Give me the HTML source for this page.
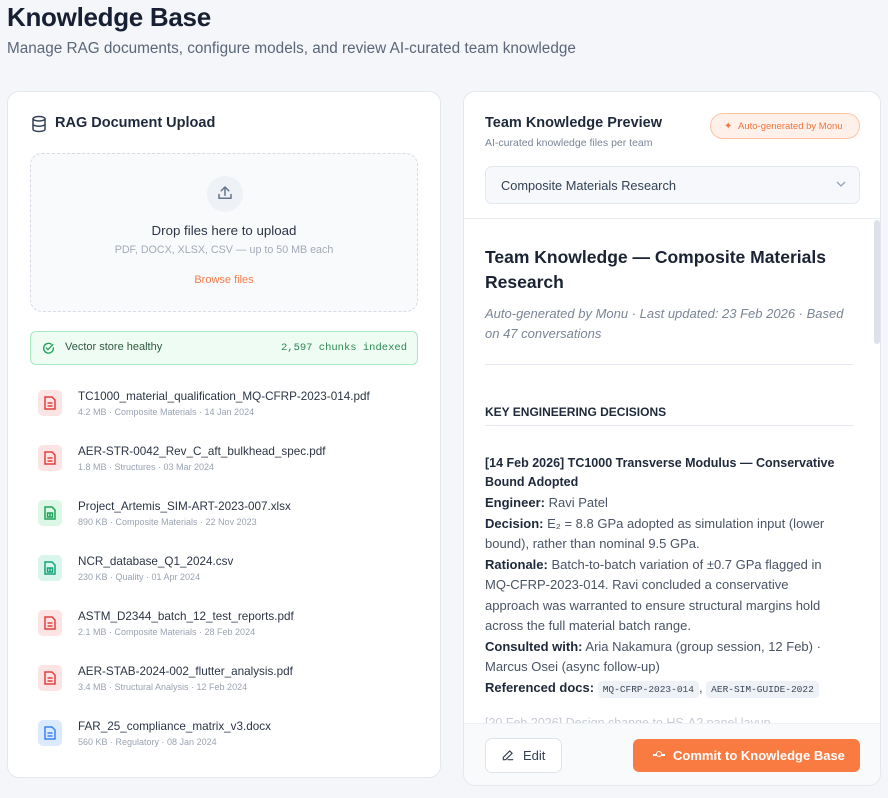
<!DOCTYPE html>
<html><head><meta charset="utf-8"><style>
*{box-sizing:border-box;margin:0;padding:0}
body{width:888px;height:798px;overflow:hidden;background:#f4f6f9;font-family:"Liberation Sans",sans-serif;color:#1e293b;position:relative}
.abs{position:absolute}
h1{position:absolute;left:7px;top:2px;font-size:26px;font-weight:700;color:#172033;letter-spacing:-0.3px}
.sub{left:7px;top:40px;font-size:15.3px;color:#5b6678}
.card{position:absolute;background:#fff;border:1px solid #e3e8ef;border-radius:12px;overflow:hidden}
.drop{left:22px;top:61px;width:388px;height:159px;border:1px dashed #d6dce5;border-radius:12px;background:#f9fafc}
.vs{left:22px;top:239px;width:388px;height:34px;border:1px solid #a9e8c0;border-radius:6px;background:#effcf3}
.file{position:absolute;left:30px}
.fi{position:absolute;left:0;top:0;width:24px;height:26px;border-radius:5px}
.fi svg{position:absolute;left:6px;top:6px}
.fn{position:absolute;left:40px;top:0px;font-size:11.7px;color:#2c3546;white-space:nowrap}
.fm{position:absolute;left:40px;top:17px;font-size:9px;color:#9aa3b2;white-space:nowrap}
.body{font-size:13px;color:#4a5466;line-height:20.5px}
.body b{color:#1e293b;font-weight:600}
code{font-family:"Liberation Mono",monospace;font-size:9.5px;background:#eef1f6;color:#3d4758;padding:3px 5px;border-radius:4px}
</style></head><body>
<h1>Knowledge Base</h1>
<div class="abs sub">Manage RAG documents, configure models, and review AI-curated team knowledge</div>

<div class="card" style="left:7px;top:91px;width:434px;height:687px">
 <svg class="abs" style="left:22px;top:23px" width="18" height="18" viewBox="0 0 24 24" fill="none" stroke="#334155" stroke-width="2"><ellipse cx="12" cy="5" rx="8" ry="3"/><path d="M4 5v14c0 1.7 3.6 3 8 3s8-1.3 8-3V5M4 12c0 1.7 3.6 3 8 3s8-1.3 8-3"/></svg>
 <div class="abs" style="left:47px;top:23px;font-size:14.5px;font-weight:600;color:#1e293b">RAG Document Upload</div>
 <div class="abs drop">
  <div class="abs" style="left:176px;top:22px;width:36px;height:36px;border-radius:50%;background:#eef1f5"></div>
  <svg class="abs" style="left:185px;top:30px" width="18" height="18" viewBox="0 0 24 24" fill="none" stroke="#64748b" stroke-width="2" stroke-linecap="round" stroke-linejoin="round"><path d="M4 14v5h16v-5M12 4v11M7 9l5-5 5 5"/></svg>
  <div class="abs" style="left:0;width:386px;top:69px;text-align:center;font-size:13.3px;color:#2c3546">Drop files here to upload</div>
  <div class="abs" style="left:0;width:386px;top:90px;text-align:center;font-size:10.7px;color:#a3abb8">PDF, DOCX, XLSX, CSV — up to 50 MB each</div>
  <div class="abs" style="left:0;width:386px;top:120px;text-align:center;font-size:11px;color:#f47c4a">Browse files</div>
 </div>
 <div class="abs vs">
  <svg class="abs" style="left:11px;top:10px" width="13" height="13" viewBox="0 0 24 24" fill="none" stroke="#22a35a" stroke-width="2.5" stroke-linecap="round"><path d="M21 11a9 9 0 1 1-4-7"/><path d="M8 11l3 3 9-9"/></svg>
  <div class="abs" style="left:34px;top:9px;font-size:11px;color:#2f5a40">Vector store healthy</div>
  <div class="abs" style="right:10px;top:10px;font-family:'Liberation Mono',monospace;font-size:10.5px;color:#2d8a52">2,597 chunks indexed</div>
 </div>
 <div class="file" style="top:298px"><div class="fi" style="background:#fde4e4"><svg width="12" height="14" viewBox="0 0 12 14" fill="none" stroke="#e53e3e" stroke-width="1.5"><path d="M1 1h7l3 3v9H1z"/><path d="M3.5 7h5M3.5 10h5"/></svg></div><div class="fn">TC1000_material_qualification_MQ-CFRP-2023-014.pdf</div><div class="fm">4.2 MB · Composite Materials · 14 Jan 2024</div></div>
 <div class="file" style="top:353px"><div class="fi" style="background:#fde4e4"><svg width="12" height="14" viewBox="0 0 12 14" fill="none" stroke="#e53e3e" stroke-width="1.5"><path d="M1 1h7l3 3v9H1z"/><path d="M3.5 7h5M3.5 10h5"/></svg></div><div class="fn">AER-STR-0042_Rev_C_aft_bulkhead_spec.pdf</div><div class="fm">1.8 MB · Structures · 03 Mar 2024</div></div>
 <div class="file" style="top:408px"><div class="fi" style="background:#dcf7e5"><svg width="12" height="14" viewBox="0 0 12 14" fill="none" stroke="#22a35a" stroke-width="1.5"><path d="M1 1h7l3 3v9H1z"/><path d="M3.5 7h5v4h-5zM6 7v4"/></svg></div><div class="fn">Project_Artemis_SIM-ART-2023-007.xlsx</div><div class="fm">890 KB · Composite Materials · 22 Nov 2023</div></div>
 <div class="file" style="top:463px"><div class="fi" style="background:#d9f5ec"><svg width="12" height="14" viewBox="0 0 12 14" fill="none" stroke="#16a37a" stroke-width="1.5"><path d="M1 1h7l3 3v9H1z"/><path d="M3.5 7h5v4h-5zM6 7v4"/></svg></div><div class="fn">NCR_database_Q1_2024.csv</div><div class="fm">230 KB · Quality · 01 Apr 2024</div></div>
 <div class="file" style="top:518px"><div class="fi" style="background:#fde4e4"><svg width="12" height="14" viewBox="0 0 12 14" fill="none" stroke="#e53e3e" stroke-width="1.5"><path d="M1 1h7l3 3v9H1z"/><path d="M3.5 7h5M3.5 10h5"/></svg></div><div class="fn">ASTM_D2344_batch_12_test_reports.pdf</div><div class="fm">2.1 MB · Composite Materials · 28 Feb 2024</div></div>
 <div class="file" style="top:573px"><div class="fi" style="background:#fde4e4"><svg width="12" height="14" viewBox="0 0 12 14" fill="none" stroke="#e53e3e" stroke-width="1.5"><path d="M1 1h7l3 3v9H1z"/><path d="M3.5 7h5M3.5 10h5"/></svg></div><div class="fn">AER-STAB-2024-002_flutter_analysis.pdf</div><div class="fm">3.4 MB · Structural Analysis · 12 Feb 2024</div></div>
 <div class="file" style="top:628px"><div class="fi" style="background:#dbeafe"><svg width="12" height="14" viewBox="0 0 12 14" fill="none" stroke="#3b82f6" stroke-width="1.5"><path d="M1 1h7l3 3v9H1z"/><path d="M3.5 7h5M3.5 10h5"/></svg></div><div class="fn">FAR_25_compliance_matrix_v3.docx</div><div class="fm">560 KB · Regulatory · 08 Jan 2024</div></div>
</div>

<div class="card" style="left:463px;top:91px;width:418px;height:695px">
 <div class="abs" style="left:21px;top:23px;font-size:14.5px;font-weight:600;color:#1e293b">Team Knowledge Preview</div>
 <div class="abs" style="left:21px;top:45px;font-size:10.5px;color:#7a8597">AI-curated knowledge files per team</div>
 <div class="abs" style="left:246px;top:21px;width:150px;height:26px;border:1px solid #fbc3a6;background:#fff1ea;border-radius:13px;font-size:9.5px;color:#f2743e;padding:7px 0 0 27px">Auto-generated by Monu</div>
 <div class="abs" style="left:260px;top:29px;font-size:10px;color:#f2743e">✦</div>
 <div class="abs" style="left:21px;top:74px;width:375px;height:38px;border:1px solid #e3e8ef;background:#f6f8fb;border-radius:7px;font-size:12.8px;color:#334155;padding:11px 0 0 15px">Composite Materials Research</div>
 <svg class="abs" style="left:372px;top:88px" width="10" height="8" viewBox="0 0 10 8" fill="none" stroke="#94a3b8" stroke-width="1.3"><path d="M1 2l4 4 4-4"/></svg>
 <div class="abs" style="left:0;top:126px;width:418px;height:1px;background:#e8ecf2"></div>
 <div class="abs" style="left:410px;top:128px;width:6px;height:124px;border-radius:3px;background:#dde2ea"></div>
 <div class="abs" style="left:21px;top:153px;width:350px;font-size:17.5px;font-weight:700;line-height:25px;color:#1a2233">Team Knowledge — Composite Materials Research</div>
 <div class="abs" style="left:21px;top:212px;width:375px;font-size:13px;font-style:italic;line-height:20px;color:#7a8597">Auto-generated by Monu · Last updated: 23 Feb 2026 · Based on 47 conversations</div>
 <div class="abs" style="left:21px;top:272px;width:368px;height:1px;background:#e3e8ef"></div>
 <div class="abs" style="left:21px;top:313px;font-size:12px;font-weight:700;color:#1e293b">KEY ENGINEERING DECISIONS</div>
 <div class="abs" style="left:21px;top:333px;width:368px;height:1px;background:#e3e8ef"></div>
 <div class="abs" style="left:21px;top:362px;width:370px;font-size:12.5px;font-weight:600;line-height:18.5px;color:#1e293b">[14 Feb 2026] TC1000 Transverse Modulus — Conservative Bound Adopted</div>
 <div class="abs body" style="left:21px;top:401px;width:350px">
  <b>Engineer:</b> Ravi Patel<br>
  <b>Decision:</b> E₂ = 8.8 GPa adopted as simulation input (lower bound), rather than nominal 9.5 GPa.<br>
  <b>Rationale:</b> Batch-to-batch variation of ±0.7 GPa flagged in MQ&#8209;CFRP&#8209;2023&#8209;014. Ravi concluded a conservative approach was warranted to ensure structural margins hold across the full material batch range.<br>
  <b>Consulted with:</b> Aria Nakamura (group session, 12 Feb) · Marcus Osei (async follow-up)<br>
  <b>Referenced docs:</b> <code>MQ-CFRP-2023-014</code>, <code>AER-SIM-GUIDE-2022</code>
 </div>
 <div class="abs" style="left:21px;top:624px;font-size:12.5px;color:#c5cbd4">[20 Feb 2026] Design change to HS-A2 panel layup</div>
 <div class="abs" style="left:0;top:631px;width:418px;height:64px;background:#f8fafc;border-top:1px solid #edf0f5"></div>
 <div class="abs" style="left:21px;top:646px;width:77px;height:35px;border:1px solid #dfe4eb;border-radius:7px;background:#fff;font-size:13px;color:#334155;padding:9px 0 0 37px">Edit</div>
 <svg class="abs" style="left:37px;top:656px" width="14" height="14" viewBox="0 0 24 24" fill="none" stroke="#334155" stroke-width="2" stroke-linecap="round"><path d="M4 20h4L19 9l-4-4L4 16z"/><path d="M12 20h8"/></svg>
 <div class="abs" style="left:169px;top:647px;width:227px;height:33px;background:#f97b42;border-radius:6px;font-size:13px;font-weight:600;color:#fff;padding:9px 0 0 40px">Commit to Knowledge Base</div>
 <div class="abs" style="left:189px;top:662px;width:12px;height:1.5px;background:#fff"></div>
 <div class="abs" style="left:192px;top:659px;width:6px;height:6px;border:1.5px solid #fff;border-radius:50%;background:#f97b42"></div>
</div>
</body></html>
